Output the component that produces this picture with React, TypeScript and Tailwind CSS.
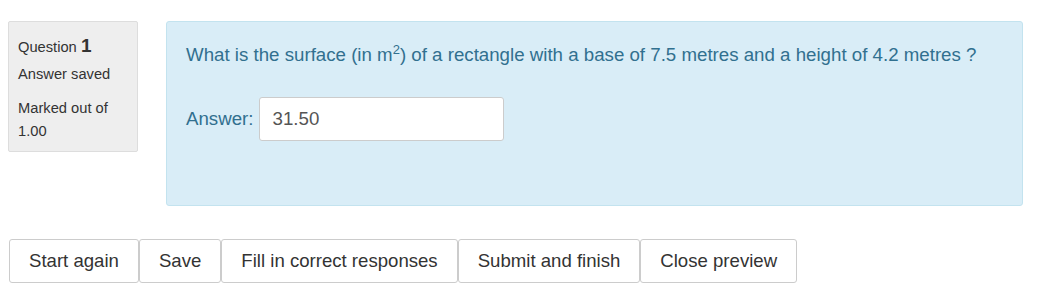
export default function App() {
  const buttons = ["Start again", "Save", "Fill in correct responses", "Submit and finish", "Close preview"];

  return (
    <div className="w-[1037px] h-[297px] bg-white font-['Liberation_Sans',Arial,sans-serif] overflow-hidden">
      <div className="flex items-start pt-[21px] pl-[8px] pr-[14px]">
        {/* Question info */}
        <div className="w-[130px] h-[131px] shrink-0 bg-[#eeeeee] border border-[#dddddd] rounded-[2px] px-[9px] pt-[11px] text-[#333333] text-[14.7px] leading-[1.5]">
          <div className="leading-[26px]">
            Question <span className="font-bold text-[19px]">1</span>
          </div>
          <div className="mt-[4px] leading-[20px]">Answer saved</div>
          <div className="mt-[13px] leading-[23px]">
            Marked out of
            <br />
            1.00
          </div>
        </div>

        {/* Question content */}
        <div className="ml-[28px] flex-1 h-[185px] bg-[#d9edf7] border border-[#c3e3ef] rounded-[3px] px-[19px] pt-[20px] text-[#31708f] text-[18.7px]">
          <p className="leading-[26px]">
            What is the surface (in m<sup className="text-[13px] relative -top-[7px]">2</sup>) of a rectangle with a base of 7.5 metres and a height of 4.2 metres ?
          </p>
          <div className="flex items-center mt-[29px]">
            <span className="mr-[5px]">Answer:</span>
            <div className="w-[245px] h-[44px] bg-white border border-[#cccccc] rounded-[3px] flex items-center px-[13px] text-[#555555]">
              31.50
            </div>
          </div>
        </div>
      </div>

      {/* Controls */}
      <div className="flex pl-[9px] mt-[33px]">
        {buttons.map((b) => (
          <button
            key={b}
            className="h-[44px] px-[19px] bg-white border border-[#cccccc] rounded-[3px] text-[#333333] text-[18.6px] leading-none"
          >
            {b}
          </button>
        ))}
      </div>
    </div>
  );
}
